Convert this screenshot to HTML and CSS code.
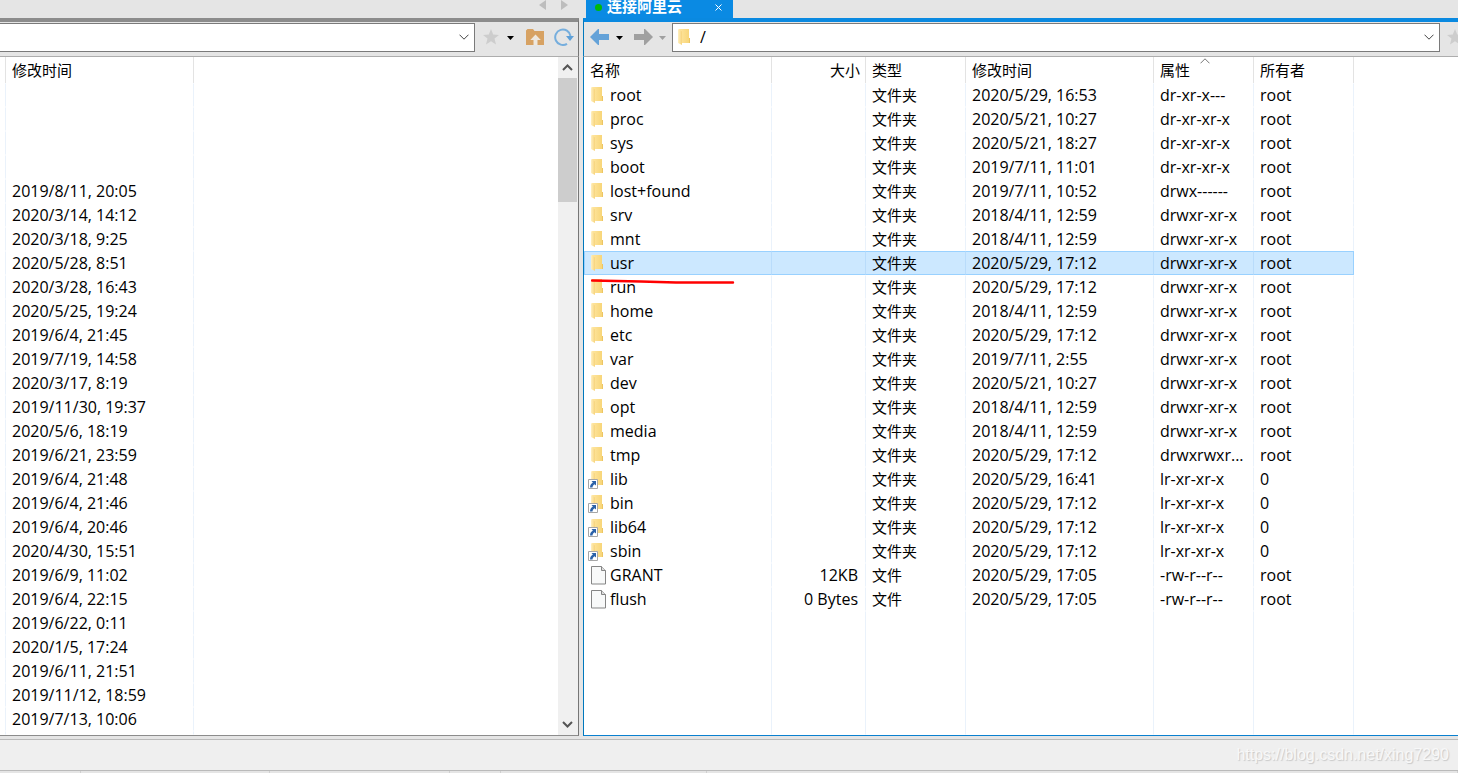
FILE: index.html
```html
<!DOCTYPE html>
<html lang="zh-CN">
<head>
<meta charset="utf-8">
<title>连接阿里云</title>
<link rel="stylesheet" href="styles.css">
</head>
<body>
<svg class="defs" aria-hidden="true">
  <defs>
    <linearGradient id="gold" x1="0" x2="1"><stop offset="0" stop-color="#ffe6a0"/><stop offset="1" stop-color="#f7d475"/></linearGradient>
    <linearGradient id="leaf" x1="0" x2="1"><stop offset="0" stop-color="#fff0c0"/><stop offset="1" stop-color="#f7d37a"/></linearGradient>
    <symbol id="folder" viewBox="0 0 12 16"><path d="M1 0h10v9h1v5H3z" fill="url(#gold)"/><path d="M11 9h1v5h-1z" fill="#ecc564"/><path d="M0 0l4 2.500v13.500L0 14z" fill="url(#leaf)"/></symbol>
    <symbol id="link" viewBox="0 0 10 10"><path d="M.5.5h9v9h-9z" fill="#fff" stroke="#a6a6a6"/><path d="M3.500 2H8v4.500L6.500 5.200C5 6.300 4.700 7 4.500 8.500H2C2.100 6 3 4.700 4.900 3.500z" fill="#2b62a9"/></symbol>
    <symbol id="page" viewBox="0 0 15 19"><path d="M.5.5h10l4 4v13.500h-14z" fill="#f8f9f9" stroke="#858585"/><path d="M10.500.5v4h4" fill="#ddd" stroke="#858585"/></symbol>
    <symbol id="star" viewBox="0 0 16 16"><path d="M8 0l2.200 5.500 5.800.4-4.500 3.700L13 15.500 8 12.200 3 15.500l1.500-5.900L0 5.900l5.800-.4z" fill="#cdcdcd"/></symbol>
    <symbol id="caret" viewBox="0 0 7 4"><path d="M0 0h7L3.500 4z" fill="currentColor"/></symbol>
    <symbol id="chevron" viewBox="0 0 10 6"><path d="M.5.7L5 5.200 9.500.7" fill="none" stroke="currentColor"/></symbol>
    <symbol id="arrow" viewBox="0 0 19 16"><path d="M0 8l8-8h1v5h10v6H9v5H8z" fill="currentColor"/></symbol>
  </defs>
</svg>
<main class="panes">
  <section class="pane local">
    <div class="tabs"><button class="nav" aria-label="上一个"><svg width="7" height="10" viewBox="0 0 7 10"><path d="M7 0v10L0 5z" fill="#bdbdbd"/></svg></button><button class="nav" aria-label="下一个"><svg width="7" height="10" viewBox="0 0 7 10"><path d="M0 0v10l7-5z" fill="#bdbdbd"/></svg></button></div>
    <div class="toolbar">
      <div class="address"><input type="text" aria-label="本地路径"><button aria-label="展开"><svg width="10" height="6"><use href="#chevron"/></svg></button></div>
      <button class="tool bookmark" aria-label="书签"><svg width="16" height="16"><use href="#star"/></svg><svg width="7" height="4"><use href="#caret"/></svg></button>
      <button class="tool" aria-label="上一级"><svg width="18" height="16" viewBox="0 0 18 16"><path d="M0 1.500L1.500 0H7l1.500 2H18v14H0z" fill="#d7a263"/><path d="M9.500 5.500l5.300 5.500h-3.300v5H7.500v-5H4.300z" fill="#eee8df"/></svg></button>
      <button class="tool" aria-label="刷新"><svg width="20" height="18" viewBox="0 0 20 18"><path d="M13 15.800A7.700 7.700 0 1 1 16.500 8" fill="none" stroke="#76aedd" stroke-width="2"/><path d="M12 8h8l-4 5z" fill="#5ea0d8"/></svg></button>
    </div>
    <div class="content">
      <div class="listing">
        <table class="files dates">
          <colgroup><col class="c-edge"><col class="c-date"><col></colgroup>
          <thead><tr><th></th><th>修改时间</th><th></th></tr></thead>
          <tbody id="local"></tbody>
        </table>
      </div>
      <div class="scrollbar">
        <button aria-label="向上滚动"><svg class="up" width="11" height="7" viewBox="0 0 11 7"><path d="M1 1l4.500 4.500L10 1" fill="none" stroke="#555" stroke-width="2"/></svg></button>
        <div class="track"><div class="thumb"></div></div>
        <button aria-label="向下滚动"><svg width="11" height="7" viewBox="0 0 11 7"><path d="M1 1l4.500 4.500L10 1" fill="none" stroke="#555" stroke-width="2"/></svg></button>
      </div>
    </div>
  </section>
  <section class="pane remote">
    <div class="tabs"><div class="tab"><span class="dot"></span><span class="title">连接阿里云</span><button aria-label="关闭"><svg width="7" height="7" viewBox="0 0 7 7"><path d="M.5.5l6 6m0-6l-6 6" stroke="#fff"/></svg></button></div></div>
    <div class="toolbar">
      <button class="tool back" aria-label="后退"><svg width="19" height="16"><use href="#arrow"/></svg><svg class="black" width="7" height="4"><use href="#caret"/></svg></button>
      <button class="tool forward" aria-label="前进"><svg class="flip" width="19" height="16"><use href="#arrow"/></svg><svg width="7" height="4"><use href="#caret"/></svg></button>
      <div class="address"><svg width="12" height="16"><use href="#folder"/></svg><input type="text" value="/" aria-label="远程路径"><button aria-label="展开"><svg width="10" height="6"><use href="#chevron"/></svg></button></div>
      <button class="tool more" aria-label="书签"><svg width="16" height="16"><use href="#star"/></svg></button>
    </div>
    <div class="content">
      <div class="listing">
        <table class="files remote-files">
          <colgroup><col class="c-name"><col class="c-size"><col class="c-small"><col class="c-date"><col class="c-small"><col class="c-small"></colgroup>
          <thead><tr><th>名称</th><th class="size">大小</th><th>类型</th><th>修改时间</th><th class="sorted">属性<svg class="up" width="10" height="6"><use href="#chevron"/></svg></th><th>所有者</th></tr></thead>
          <tbody id="remote"></tbody>
        </table>
      </div>
    </div>
  </section>
</main>
<footer class="status"><span class="watermark">https://blog.csdn.net/xing7290</span></footer>
<div class="cells"><span class="s1"></span><span class="s2"></span><span class="s3"></span><span class="s4"></span><span class="s5"></span><span class="s6"></span></div>
<script src="app.js"></script>
</body>
</html>
```
FILE: styles.css
```css
* { box-sizing: border-box; }
body {
  margin: 0;
  height: 100vh;
  display: flex;
  flex-direction: column;
  overflow: hidden;
  background: #e5e5e5;
  color: #000;
  font: 16px/24px "Open Sans", "Noto Sans CJK SC", sans-serif;
}
.defs { position: absolute; width: 0; height: 0; }
svg { display: block; flex: none; }
button { border: 0; padding: 0; background: none; color: inherit; display: flex; align-items: center; }

.panes {
  flex: 1;
  min-height: 0;
  display: grid;
  grid-template-columns: minmax(0, 579fr) minmax(0, 875fr);
  column-gap: 4px;
}
.pane { display: flex; flex-direction: column; min-height: 0; overflow: hidden; }
.tabs { height: 18px; flex: none; display: flex; }
.local .tabs { justify-content: flex-end; align-items: flex-start; gap: 15px; padding-right: 11px; }
.nav { height: 10px; }
.tab {
  width: 147px;
  margin-left: 3px;
  padding: 0 11px 0 9px;
  display: flex;
  align-items: center;
  background: #0a8ae3;
  color: #fff;
}
.dot { width: 7px; height: 7px; border-radius: 50%; background: #00b90a; margin: 0 5px 4px 0; }
.title { flex: 1; font-size: 15px; line-height: 12px; font-weight: 700; padding-bottom: 6px; }
.tab button { padding-bottom: 4px; }

.toolbar {
  height: 39px;
  flex: none;
  display: flex;
  align-items: center;
  padding-bottom: 4px;
  border-top: 4px solid #8c8c8c;
  border-bottom: 1px solid #adadad;
}
.local .toolbar { border-right: 1px solid #767676; gap: 10px; padding-right: 4px; }
.remote .toolbar { border-top-color: #0a89e0; border-left: 1px solid #0078bd; padding-left: 6px; }
.address {
  flex: 1;
  height: 29px;
  min-width: 0;
  display: flex;
  align-items: center;
  border: 1px solid #7a7a7a;
  background: #fff;
  padding: 0 5px;
  color: #444;
}
.local .address { border-left: 0; margin-right: -2px; }
.address input { flex: 1; min-width: 0; border: 0; outline: 0; padding: 0 10px; font: inherit; background: none; color: #000; }
.tool { gap: 9px; }
.bookmark { gap: 8px; margin-right: 2px; color: #000; }
.tool.bookmark svg + svg, .back svg + svg, .forward svg + svg { margin-top: 1px; }
.back { color: #64a2d8; gap: 7px; }
.black { color: #000; }
.forward { color: #a0a0a0; gap: 6px; margin: 0 6px 0 11px; }
.flip { transform: scaleX(-1); }
.more { width: 18px; padding-left: 7px; overflow: hidden; }

.content { flex: 1; min-height: 0; display: flex; background: #fff; border-bottom: 1px solid #8c8c8c; }
.local .content { border-right: 1px solid #767676; }
.remote .content { border-left: 1px solid #0078bd; border-bottom-color: #0a80cf; }
.listing { flex: 1; min-width: 0; overflow: hidden; }
.files { table-layout: fixed; border-collapse: separate; border-spacing: 0; height: 100%; }
.dates { width: 100%; }
.remote-files { width: 770px; }
.c-edge { width: 6px; }
.c-date { width: 188px; }
.c-name { width: 188px; }
.c-size { width: 94px; }
.c-small { width: 100px; }
.files th {
  height: 26px;
  padding: 0 6px;
  font-weight: 400;
  font-size: 15px;
  line-height: 24px;
  text-align: left;
  border-right: 1px solid #e3e3e3;
}
.files td {
  height: 24px;
  line-height: 22px;
  padding: 0 6px;
  white-space: nowrap;
  border: solid transparent;
  border-width: 1px 1px 1px 0;
  border-right-color: #eaf2fb;
}
.files .fill td { height: auto; padding: 0; line-height: 0; }
.dates th:first-child, .dates td:first-child { padding: 0; }
.dates th:last-child, .dates td:last-child { border-right: 0; }
.files .kind { font-size: 15px; }
.files .size { text-align: right; padding-right: 5px; }
.files td.size { padding-right: 7px; }
.selected td { background: #cce8ff; border-color: #99d1ff; border-right-color: #b9dcfb; }
.selected td:first-child { border-left: 1px solid #99d1ff; padding-left: 5px; }
.selected td:last-child { border-right-color: #99d1ff; }
.entry { position: relative; display: flex; align-items: center; height: 22px; }
.entry .icon { width: 20px; flex: none; }
.entry .badge { position: absolute; left: -2px; top: 11px; }
.entry .mark { position: absolute; left: 1px; top: 3px; }
.icon .folder { margin-left: 1px; }
.icon .page { margin-left: 1px; }
.sorted { position: relative; color: #000; }
.sorted svg { position: absolute; top: 1px; left: 46px; color: #777; }

.scrollbar { width: 20px; flex: none; display: flex; flex-direction: column; background: #f0f0f0; padding-right: 1px; }
.scrollbar button { height: 21px; justify-content: center; }
.up { transform: scaleY(-1); }
.track { flex: 1; }
.thumb { height: 124px; background: #cdcdcd; }

.status {
  height: 32px;
  margin-top: 3px;
  flex: none;
  display: flex;
  align-items: center;
  justify-content: flex-end;
  padding-right: 9px;
  background: #efefef;
  border: solid #bababa;
  border-width: 1px 0;
}
.watermark { font: 16px/18px "Liberation Sans", sans-serif; color: #f8f8f8; text-shadow: 1px 1px 1px #c8c8c8; }
.cells { height: 2px; flex: none; display: flex; }
.cells span { border-right: 1px solid #cfcfcf; }
.s1 { flex: 80; }
.s2 { flex: 189; }
.s3 { flex: 180; }
.s4 { flex: 50; }
.s5 { flex: 206; }
.s6 { flex: 753; }
```
FILE: app.js
```js
const dates = ["", "", "", "", "2019/8/11, 20:05", "2020/3/14, 14:12", "2020/3/18, 9:25", "2020/5/28, 8:51",
  "2020/3/28, 16:43", "2020/5/25, 19:24", "2019/6/4, 21:45", "2019/7/19, 14:58", "2020/3/17, 8:19",
  "2019/11/30, 19:37", "2020/5/6, 18:19", "2019/6/21, 23:59", "2019/6/4, 21:48", "2019/6/4, 21:46",
  "2019/6/4, 20:46", "2020/4/30, 15:51", "2019/6/9, 11:02", "2019/6/4, 22:15", "2019/6/22, 0:11",
  "2020/1/5, 17:24", "2019/6/11, 21:51", "2019/11/12, 18:59", "2019/7/13, 10:06"];

const files = [
  ["root", "2020/5/29, 16:53", "dr-xr-x---"],
  ["proc", "2020/5/21, 10:27", "dr-xr-xr-x"],
  ["sys", "2020/5/21, 18:27", "dr-xr-xr-x"],
  ["boot", "2019/7/11, 11:01", "dr-xr-xr-x"],
  ["lost+found", "2019/7/11, 10:52", "drwx------"],
  ["srv", "2018/4/11, 12:59", "drwxr-xr-x"],
  ["mnt", "2018/4/11, 12:59", "drwxr-xr-x"],
  ["usr", "2020/5/29, 17:12", "drwxr-xr-x"],
  ["run", "2020/5/29, 17:12", "drwxr-xr-x"],
  ["home", "2018/4/11, 12:59", "drwxr-xr-x"],
  ["etc", "2020/5/29, 17:12", "drwxr-xr-x"],
  ["var", "2019/7/11, 2:55", "drwxr-xr-x"],
  ["dev", "2020/5/21, 10:27", "drwxr-xr-x"],
  ["opt", "2018/4/11, 12:59", "drwxr-xr-x"],
  ["media", "2018/4/11, 12:59", "drwxr-xr-x"],
  ["tmp", "2020/5/29, 17:12", "drwxrwxr..."],
  ["lib", "2020/5/29, 16:41", "lr-xr-xr-x"],
  ["bin", "2020/5/29, 17:12", "lr-xr-xr-x"],
  ["lib64", "2020/5/29, 17:12", "lr-xr-xr-x"],
  ["sbin", "2020/5/29, 17:12", "lr-xr-xr-x"],
  ["GRANT", "2020/5/29, 17:05", "-rw-r--r--", "12KB"],
  ["flush", "2020/5/29, 17:05", "-rw-r--r--", "0 Bytes"]
];

const folder = '<svg class="folder" width="12" height="16"><use href="#folder"/></svg>';
const page = '<svg class="page" width="15" height="19"><use href="#page"/></svg>';
const badge = '<svg class="badge" width="10" height="10"><use href="#link"/></svg>';
const underline = '<svg class="mark" width="144" height="6" viewBox="0 0 144 6"><path d="M1 1.500L50 2.500 85 3.500H142" fill="none" stroke="#f00" stroke-width="2.400" stroke-linecap="round"/></svg>';

document.getElementById("local").innerHTML =
  dates.map(d => `<tr><td></td><td>${d}</td><td></td></tr>`).join("") +
  '<tr class="fill"><td></td><td></td><td></td></tr>';

document.getElementById("remote").innerHTML = files.map(([name, date, attrs, size]) => {
  const linked = attrs[0] === "l";
  return `<tr class="${name === "usr" ? "selected" : ""}">
    <td><div class="entry"><span class="icon">${size ? page : folder}${linked ? badge : ""}</span>${name}${name === "run" ? underline : ""}</div></td>
    <td class="size">${size || ""}</td><td class="kind">${size ? "文件" : "文件夹"}</td>
    <td>${date}</td><td>${attrs}</td><td>${linked ? "0" : "root"}</td></tr>`;
}).join("") + `<tr class="fill">${"<td></td>".repeat(6)}</tr>`;
```
